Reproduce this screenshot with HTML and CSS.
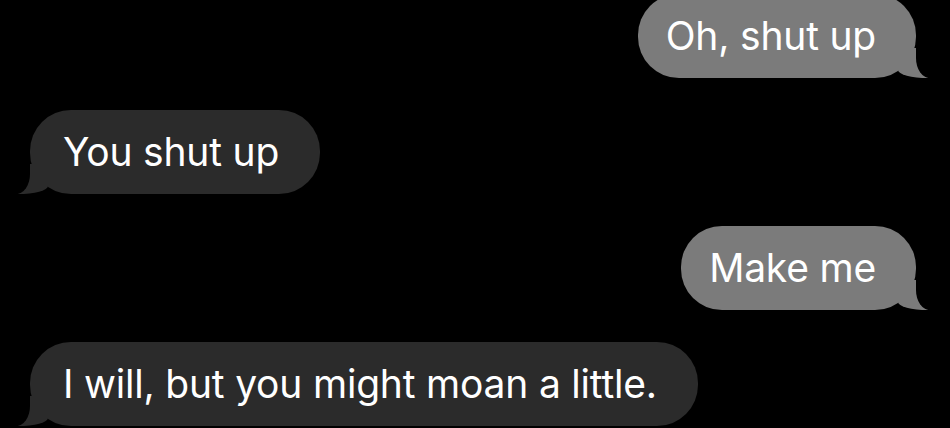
FILE: index.html
```html
<!DOCTYPE html>
<html>
<head>
<meta charset="utf-8">
<link rel="stylesheet" href="styles.css">
</head>
<body>
<div class="chat">
  <div class="bubble sent">Oh, shut up</div>
  <div class="bubble received">You shut up</div>
  <div class="bubble sent">Make me</div>
  <div class="bubble received">I will, but you might moan a little.</div>
</div>
</body>
</html>
```
FILE: styles.css
```css
html, body {
  margin: 0;
  padding: 0;
  background: #000;
  height: 100%;
  overflow: hidden;
}
.chat {
  display: flex;
  flex-direction: column;
  gap: 32px;
  margin-top: -6px;
  padding: 0 34px 0 30px;
  font-family: Inter, "Liberation Sans", sans-serif;
}
.bubble {
  position: relative;
  font-size: 39px;
  line-height: 46px;
  padding: 19px 41px 19px 33px;
  border-radius: 41px;
  color: #fff;
  white-space: nowrap;
  letter-spacing: -0.2px;
}
.sent {
  align-self: flex-end;
  background: #7b7b7b;
  padding: 19px 40px 19px 28px;
}
.received {
  align-self: flex-start;
  background: #2b2b2b;
}
.sent::before,
.received::before {
  content: "";
  position: absolute;
  bottom: 0;
  height: 30px;
  width: 30px;
}
.sent::after,
.received::after {
  content: "";
  position: absolute;
  bottom: 0;
  height: 30px;
  width: 15px;
  background: #000;
}
.sent::before {
  right: -12px;
  background: #7b7b7b;
  border-bottom-left-radius: 30px 8px;
}
.sent::after {
  right: -15px;
  border-bottom-left-radius: 14px 20px;
}
.received::before {
  left: -12px;
  background: #2b2b2b;
  border-bottom-right-radius: 30px 8px;
}
.received::after {
  left: -15px;
  border-bottom-right-radius: 14px 20px;
}
```
